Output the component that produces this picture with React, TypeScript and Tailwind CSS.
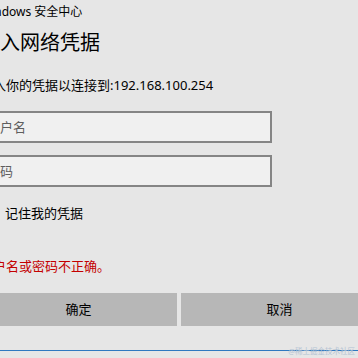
import React from "react";

const font = {
  fontFamily: '"Noto Sans", "Noto Sans CJK SC", sans-serif',
};

const App: React.FC = () => {
  return (
    <div
      className="relative w-[358px] h-[358px] overflow-hidden bg-[#e6e6e6] text-black"
      style={font}
    >
      {/* dialog body, left edge sits outside the crop */}
      <div className="ml-[-20px] w-[398px] flex flex-col">
        <div className="h-[24px] leading-[24px] text-[12px] whitespace-nowrap">
          Windows 安全中心
        </div>

        <div className="mt-[7px] h-[24px] leading-[24px] text-[20px] whitespace-nowrap">
          输入网络凭据
        </div>

        <div className="mt-[20px] h-[20px] leading-[20px] text-[13px] whitespace-nowrap">
          输入你的凭据以连接到:192.168.100.254
        </div>

        <input
          readOnly
          placeholder="用户名"
          className="mt-[16px] w-[292px] h-[32px] px-[5px] text-[13px] bg-[#f0f0f0] border-2 border-[#858585] outline-none placeholder:text-[#5e5e5e]"
        />

        <input
          readOnly
          placeholder="密码"
          className="mt-[12px] w-[292px] h-[32px] px-[5px] text-[13px] bg-[#f0f0f0] border-2 border-[#858585] outline-none placeholder:text-[#5e5e5e]"
        />

        <label className="mt-[17px] h-[20px] flex items-center gap-[7px] text-[13px] whitespace-nowrap">
          <span className="w-[18px] h-[18px] border-2 border-[#333] bg-[#f0f0f0]" />
          记住我的凭据
        </label>

        <div className="mt-[32px] h-[20px] leading-[20px] text-[13px] text-[#c40000] whitespace-nowrap">
          用户名或密码不正确。
        </div>

        {/* buttons */}
        <div className="mt-[17px] grid grid-cols-2 gap-[4px]">
          <button className="h-[33px] bg-[#b7b7b7] text-[13px]">确定</button>
          <button className="h-[33px] bg-[#b7b7b7] text-[13px]">取消</button>
        </div>

        <div className="mt-[24px] h-[1px] bg-[#2f78c0]" />
      </div>

      <span className="absolute right-[3px] bottom-[3px] text-[7.5px] leading-none text-[#b3c3d3] whitespace-nowrap">
        @稀土掘金技术社区
      </span>
    </div>
  );
};

export default App;
